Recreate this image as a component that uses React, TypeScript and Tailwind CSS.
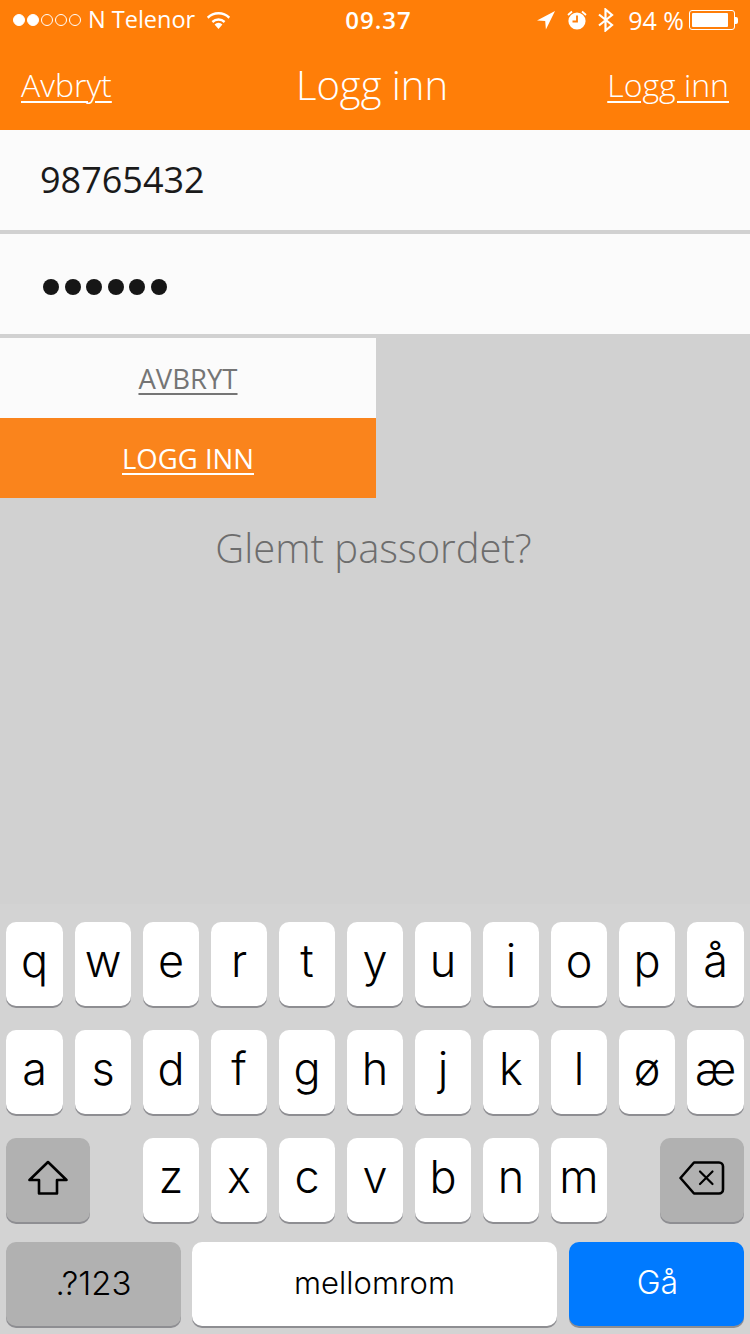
const KB_FONT = "font-['Inter','Liberation_Sans',sans-serif]";

const ROW1 = ["q", "w", "e", "r", "t", "y", "u", "i", "o", "p", "å"];
const ROW2 = ["a", "s", "d", "f", "g", "h", "j", "k", "l", "ø", "æ"];
const ROW3 = ["z", "x", "c", "v", "b", "n", "m"];

function Key({ label }: { label: string }) {
  return (
    <div className="flex h-[84px] items-center justify-center rounded-[10px] bg-white pb-[7px] text-[45px] font-light leading-none text-black shadow-[0_2px_0_#8e8e92]">
      {label}
    </div>
  );
}

function SignalDots() {
  return (
    <div className="flex items-center gap-[2px]">
      {[0, 1, 2, 3, 4].map((i) => (
        <span
          key={i}
          className={`h-[12px] w-[12px] rounded-full border border-white ${i < 2 ? "bg-white" : ""}`}
        />
      ))}
    </div>
  );
}

function StatusBar() {
  return (
    <div className="grid h-[40px] grid-cols-3 items-center pl-[13px] pr-[12px] text-[24px] leading-none text-white">
      <div className="flex items-center whitespace-nowrap">
        <SignalDots />
        <span className="ml-[7px] text-[23.5px]">N Telenor</span>
        <svg className="ml-[11px]" width="25" height="18" viewBox="0 0 25 18" fill="white">
          <path d="M12.5 18 8.6 13.4a5.6 5.6 0 0 1 7.8 0Z" />
          <path d="M12.5 7.2a10 10 0 0 1 6.9 2.8l-1.6 1.9a7.5 7.5 0 0 0-10.6 0L5.6 10a10 10 0 0 1 6.9-2.8Z" />
          <path d="M12.5 1a16.5 16.5 0 0 1 11.6 4.8l-1.6 1.9a14 14 0 0 0-20 0L.9 5.8A16.5 16.5 0 0 1 12.5 1Z" />
        </svg>
      </div>
      <div className="pl-[6px] text-center font-semibold tracking-[1px]">09.37</div>
      <div className="flex items-center justify-end whitespace-nowrap">
        <svg width="18" height="20" viewBox="0 0 18 20" fill="white">
          <path d="M18 1 0 10.5l8.2.4.7 8.6Z" />
        </svg>
        <svg className="ml-[12px]" width="20" height="20" viewBox="0 0 20 20">
          <circle cx="10" cy="11" r="8.6" fill="white" />
          <path d="M10 5.5V11.5H5.5" fill="none" stroke="#ff7e08" strokeWidth="1.8" />
          <path d="M1 5 5 1.5M19 5 15 1.5" stroke="white" strokeWidth="1.8" />
        </svg>
        <svg className="ml-[11px]" width="16" height="24" viewBox="0 0 16 24" fill="none" stroke="white" strokeWidth="2.2">
          <path d="M1 6.5 14 17l-6.5 5.5V1.5L14 7 1 17.5" />
        </svg>
        <span className="ml-[14px] text-[25px]">94 %</span>
        <div className="ml-[5px] flex items-center">
          <div className="h-[20px] w-[46px] rounded-[3px] border border-white p-[2px]">
            <div className="h-full w-[91%] rounded-[1px] bg-white" />
          </div>
          <div className="h-[7px] w-[3px] rounded-r-[2px] bg-white" />
        </div>
      </div>
    </div>
  );
}

function Keyboard() {
  return (
    <div className={`flex h-[430px] flex-col bg-[#d3d3d3] px-[6px] pt-[18px] ${KB_FONT}`}>
      <div className="grid grid-cols-[57px_repeat(9,56px)_57px] gap-[12px]">
        {ROW1.map((k) => (
          <Key key={k} label={k} />
        ))}
      </div>
      <div className="mt-[24px] grid grid-cols-[57px_repeat(9,56px)_57px] gap-[12px]">
        {ROW2.map((k) => (
          <Key key={k} label={k} />
        ))}
      </div>
      <div className="mt-[24px] flex justify-between">
        <div className="flex h-[84px] w-[84px] items-center justify-center rounded-[10px] bg-[#b1b1b1] pb-[4px] shadow-[0_2px_0_#8e8e92]">
          <svg width="40" height="36" viewBox="0 0 40 36" fill="none" stroke="black" strokeWidth="2.6" strokeLinejoin="round">
            <path d="M20 2 1.5 20H11V33.5H29V20H38.5Z" />
          </svg>
        </div>
        <div className="grid w-[464px] grid-cols-7 gap-[12px]">
          {ROW3.map((k) => (
            <Key key={k} label={k} />
          ))}
        </div>
        <div className="flex h-[84px] w-[84px] items-center justify-center rounded-[10px] bg-[#b1b1b1] pb-[4px] shadow-[0_2px_0_#8e8e92]">
          <svg width="46" height="34" viewBox="0 0 46 34" fill="none" stroke="black" strokeWidth="2.6" strokeLinejoin="round" strokeLinecap="round">
            <path d="M15 1.5H40a4 4 0 0 1 4 4V28.5a4 4 0 0 1-4 4H15L1.5 17Z" />
            <path d="M21 10.5 33.5 23M33.5 10.5 21 23" strokeWidth="2.2" />
          </svg>
        </div>
      </div>
      <div className="mt-[20px] flex gap-[11px]">
        <div className="flex h-[84px] w-[175px] items-center justify-center rounded-[10px] bg-[#b1b1b1] text-[33px] font-light text-black shadow-[0_2px_0_#8e8e92]">
          .?123
        </div>
        <div className="flex h-[84px] w-[365px] items-center justify-center rounded-[10px] bg-white pb-[2px] text-[31px] font-light text-black shadow-[0_2px_0_#8e8e92]">
          mellomrom
        </div>
        <div className="ml-px flex h-[84px] w-[175px] items-center justify-center rounded-[10px] bg-[#007aff] pb-[2px] pl-[2px] text-[32px] font-light text-white shadow-[0_2px_0_#8e8e92]">
          Gå
        </div>
      </div>
    </div>
  );
}

export default function App() {
  return (
    <div className="flex h-[1334px] w-[750px] flex-col overflow-hidden bg-[#d1d1d1] font-['Open_Sans',sans-serif]">
      <div className="h-[130px] bg-[#ff7e08] text-white">
        <StatusBar />
        <div className="grid h-[90px] grid-cols-3 items-center px-[21px] text-[32px] font-light">
          <span className="justify-self-start underline underline-offset-[4px] decoration-2">Avbryt</span>
          <span className="justify-self-center whitespace-nowrap pr-[6px] text-[40px]">Logg inn</span>
          <span className="justify-self-end whitespace-nowrap underline underline-offset-[4px] decoration-2">Logg inn</span>
        </div>
      </div>
      <div className="flex h-[100px] items-center bg-[#fbfbfb] pl-[40px] text-[36px] text-[#1a1a1a]">98765432</div>
      <div className="mt-[4px] flex h-[100px] items-center gap-[5.6px] bg-[#fbfbfb] pl-[43px] pt-[6px]">
        {[0, 1, 2, 3, 4, 5].map((i) => (
          <span key={i} className="h-[16px] w-[16px] rounded-full bg-[#161616]" />
        ))}
      </div>
      <div className="mt-[4px] w-[376px]">
        <div className="flex h-[80px] items-center justify-center bg-[#fbfbfb] pt-[2px] text-[27.5px] text-[#757575] underline underline-offset-[4px]">
          AVBRYT
        </div>
        <div className="flex h-[80px] items-center justify-center bg-[#fa841c] pt-[2px] text-[27.5px] text-white underline underline-offset-[4px]">
          LOGG INN
        </div>
      </div>
      <div className="mt-[24px] pr-[3px] text-center text-[40px] font-light leading-[52px] text-[#6d6d6d]">Glemt passordet?</div>
      <div className="flex-1" />
      <Keyboard />
    </div>
  );
}
